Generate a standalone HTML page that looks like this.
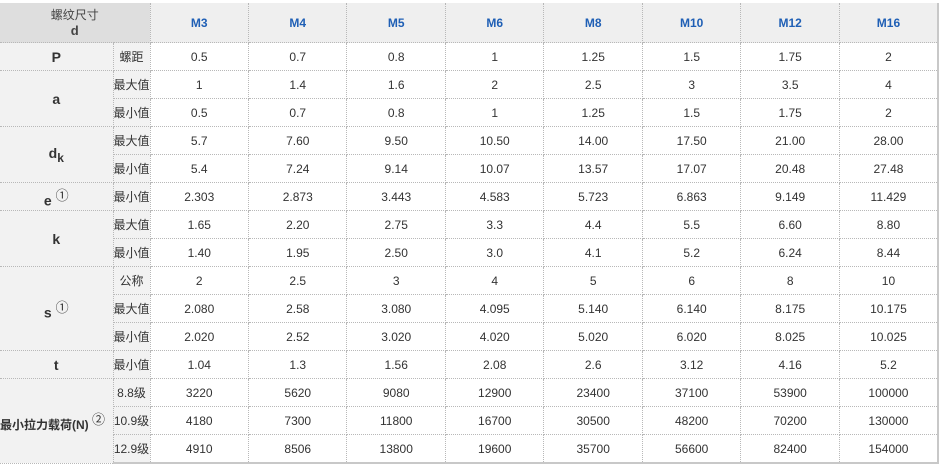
<!DOCTYPE html>
<html><head><meta charset="utf-8"><style>
body{margin:0;background:#fff;}
table{position:absolute;left:0;top:3px;border-collapse:collapse;table-layout:fixed;width:939px;font-family:"Liberation Sans","Noto Sans CJK SC",sans-serif;font-size:12px;color:#333;}
td{border:1px dotted #b8b8b8;text-align:center;padding:0;height:27px;white-space:nowrap;}
tr.h td{height:39px;background:#efefef;color:#1f5fb5;font-weight:bold;border-top:none;}
tr.h td.f{background:#dedede;color:#444;font-weight:normal;line-height:16px;}
td.l{background:#f2f2f2;font-weight:bold;font-size:14px;color:#333;}
td.s{background:#f2f2f2;color:#333;}
tr:last-child td{border-bottom:2px solid #c8c8c8;}
td:last-child{border-right:2px solid #c8c8c8;}
td.l,tr.h td.f{border-left:none;}
sup{font-weight:normal;font-size:13px;}
</style></head><body>
<table>
<colgroup><col style="width:113px"><col style="width:37px"><col span="8"></colgroup>
<tr class="h"><td class="f" colspan="2">螺纹尺寸<br><b style="font-size:13px">d</b></td><td>M3</td><td>M4</td><td>M5</td><td>M6</td><td>M8</td><td>M10</td><td>M12</td><td>M16</td></tr>
<tr><td class="l">P</td><td class="s">螺距</td><td>0.5</td><td>0.7</td><td>0.8</td><td>1</td><td>1.25</td><td>1.5</td><td>1.75</td><td>2</td></tr>
<tr><td class="l" rowspan="2">a</td><td class="s">最大值</td><td>1</td><td>1.4</td><td>1.6</td><td>2</td><td>2.5</td><td>3</td><td>3.5</td><td>4</td></tr>
<tr><td class="s">最小值</td><td>0.5</td><td>0.7</td><td>0.8</td><td>1</td><td>1.25</td><td>1.5</td><td>1.75</td><td>2</td></tr>
<tr><td class="l" rowspan="2">d<sub style="font-size:12px">k</sub></td><td class="s">最大值</td><td>5.7</td><td>7.60</td><td>9.50</td><td>10.50</td><td>14.00</td><td>17.50</td><td>21.00</td><td>28.00</td></tr>
<tr><td class="s">最小值</td><td>5.4</td><td>7.24</td><td>9.14</td><td>10.07</td><td>13.57</td><td>17.07</td><td>20.48</td><td>27.48</td></tr>
<tr><td class="l">e <sup>①</sup></td><td class="s">最小值</td><td>2.303</td><td>2.873</td><td>3.443</td><td>4.583</td><td>5.723</td><td>6.863</td><td>9.149</td><td>11.429</td></tr>
<tr><td class="l" rowspan="2">k</td><td class="s">最大值</td><td>1.65</td><td>2.20</td><td>2.75</td><td>3.3</td><td>4.4</td><td>5.5</td><td>6.60</td><td>8.80</td></tr>
<tr><td class="s">最小值</td><td>1.40</td><td>1.95</td><td>2.50</td><td>3.0</td><td>4.1</td><td>5.2</td><td>6.24</td><td>8.44</td></tr>
<tr><td class="l" rowspan="3">s <sup>①</sup></td><td class="s">公称</td><td>2</td><td>2.5</td><td>3</td><td>4</td><td>5</td><td>6</td><td>8</td><td>10</td></tr>
<tr><td class="s">最大值</td><td>2.080</td><td>2.58</td><td>3.080</td><td>4.095</td><td>5.140</td><td>6.140</td><td>8.175</td><td>10.175</td></tr>
<tr><td class="s">最小值</td><td>2.020</td><td>2.52</td><td>3.020</td><td>4.020</td><td>5.020</td><td>6.020</td><td>8.025</td><td>10.025</td></tr>
<tr><td class="l">t</td><td class="s">最小值</td><td>1.04</td><td>1.3</td><td>1.56</td><td>2.08</td><td>2.6</td><td>3.12</td><td>4.16</td><td>5.2</td></tr>
<tr><td class="l" rowspan="3" style="font-size:12px;text-align:left">最小拉力载荷(N) <sup>②</sup></td><td class="s">8.8级</td><td>3220</td><td>5620</td><td>9080</td><td>12900</td><td>23400</td><td>37100</td><td>53900</td><td>100000</td></tr>
<tr><td class="s">10.9级</td><td>4180</td><td>7300</td><td>11800</td><td>16700</td><td>30500</td><td>48200</td><td>70200</td><td>130000</td></tr>
<tr><td class="s">12.9级</td><td>4910</td><td>8506</td><td>13800</td><td>19600</td><td>35700</td><td>56600</td><td>82400</td><td>154000</td></tr>
</table>
</body></html>
